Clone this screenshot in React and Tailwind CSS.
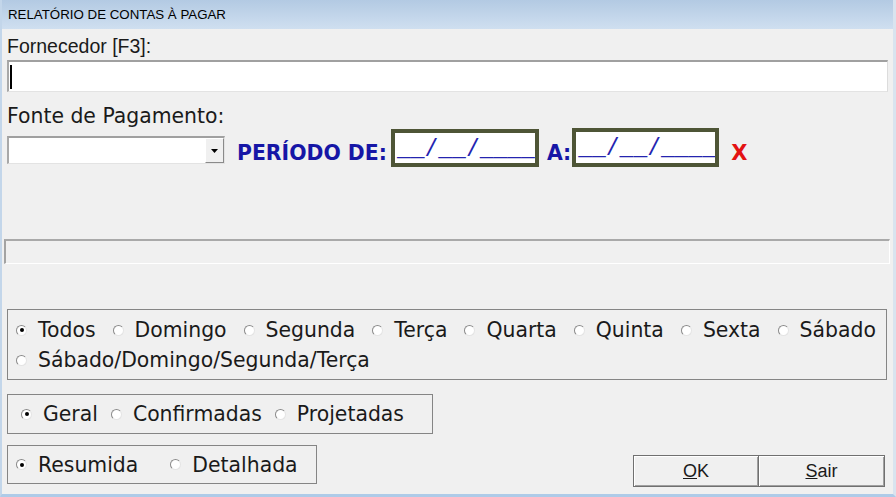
import React from 'react'

const OPT = "font-['DejaVu_Sans',sans-serif] text-[20.4px] leading-[30px] text-[#1a1a1a]"

function Radio({ checked }) {
  return (
    <span className="inline-flex w-[11px] h-[11px] shrink-0 items-center justify-center rounded-full border border-t-[#8a8a8a] border-l-[#8a8a8a] border-r-[#e4e4e4] border-b-[#e4e4e4] bg-white">
      {checked && <span className="w-[4px] h-[4px] rounded-full bg-black" />}
    </span>
  )
}

function Option({ label, checked }) {
  return (
    <label className="flex items-center whitespace-nowrap">
      <Radio checked={checked} />
      <span className="ml-[11px]">{label}</span>
    </label>
  )
}

function DateBox({ className }) {
  return (
    <div className={`border-4 border-[#4e5536] bg-white pl-[2px] overflow-hidden ${className}`}>
      <span className="block font-['Liberation_Mono',monospace] text-[23px] leading-[28px] pt-[3px] text-[#2424b0] whitespace-nowrap">
        __/__/____
      </span>
    </div>
  )
}

export default function App() {
  const days = ['Domingo', 'Segunda', 'Terça', 'Quarta', 'Quinta', 'Sexta', 'Sábado']

  return (
    <div className="w-[896px] h-[497px] flex flex-col bg-[#f0f0f0] border-l-2 border-r-[3px] border-b-[3px] border-l-[#c3d6ea] border-r-[#d9e4ef] border-b-[#aecbe8] overflow-hidden">
      {/* title bar */}
      <div className="h-[29px] shrink-0 flex items-center pl-[6px] bg-gradient-to-b from-[#b3cae3] to-[#cfdff0]">
        <span className="font-['Liberation_Sans',sans-serif] text-[13.3px] text-black">RELATÓRIO DE CONTAS À PAGAR</span>
      </div>

      <div className="flex flex-col px-[5px]">
        <label className="mt-[7px] font-['Liberation_Sans',sans-serif] text-[19.5px] leading-[21px] text-[#1a1a1a]">
          Fornecedor [F3]:
        </label>
        <div className="mt-[3px] h-[32px] bg-white border-t-2 border-l-2 border-b border-r border-t-[#a0a0a0] border-l-[#a8a8a8] border-b-[#e3e3e3] border-r-[#dcdcdc] flex items-center pl-[1px]">
          <span className="w-[2px] h-[24px] bg-black" />
        </div>

        <label className="mt-[13px] font-['DejaVu_Sans',sans-serif] text-[20.4px] leading-[23px] text-[#1a1a1a]">
          Fonte de Pagamento:
        </label>

        <div className="flex items-start h-[39px]">
          <div className="mt-[8px] w-[218px] h-[28px] bg-white border-t-2 border-l-2 border-b border-r border-t-[#a0a0a0] border-l-[#a8a8a8] border-b-[#e3e3e3] border-r-[#e3e3e3] flex justify-end items-stretch">
            <div className="w-[19px] bg-[#f0f0f0] border border-t-white border-l-white border-r-[#8a8a8a] border-b-[#8a8a8a] flex items-center justify-center">
              <svg width="7" height="4" viewBox="0 0 7 4"><path d="M0 0h7L3.5 4z" fill="#000" /></svg>
            </div>
          </div>
          <span className="ml-[12px] mt-[13px] font-['DejaVu_Sans',sans-serif] font-bold text-[20.4px] leading-[24px] text-[#1616a6] whitespace-nowrap">
            PERÍODO DE:
          </span>
          <DateBox className="ml-[4px] mt-[1px] w-[148px] h-[38px]" />
          <span className="ml-[8px] mt-[13px] font-['DejaVu_Sans',sans-serif] font-bold text-[20.4px] leading-[24px] text-[#1616a6]">
            A:
          </span>
          <DateBox className="ml-[1px] w-[147px] h-[39px]" />
          <span className="ml-[12px] mt-[13px] font-['DejaVu_Sans',sans-serif] font-bold text-[21px] leading-[24px] text-[#e31212]">
            X
          </span>
        </div>

        {/* progress bar */}
        <div className="mt-[72px] ml-[-3px] mr-[-2px] h-[25px] border-t-2 border-l-2 border-b border-r border-t-[#a9a9a9] border-l-[#a3a3a3] border-b-white border-r-white" />

        {/* days */}
        <div className={`mt-[45px] mr-[1px] h-[71px] border border-[#858585] pl-[8px] pt-[5px] ${OPT}`}>
          <div className="flex items-center gap-x-[17px]">
            <Option label="Todos" checked />
            {days.map(d => <Option key={d} label={d} />)}
          </div>
          <div className="flex items-center">
            <Option label="Sábado/Domingo/Segunda/Terça" />
          </div>
        </div>

        <div className={`mt-[14px] w-[426px] h-[40px] border border-[#858585] pl-[13px] flex items-center gap-x-[13px] ${OPT}`}>
          <Option label="Geral" checked />
          <Option label="Confirmadas" />
          <Option label="Projetadas" />
        </div>

        <div className="mt-[11px] flex items-start justify-between">
          <div className={`w-[310px] h-[39px] border border-[#858585] pl-[8px] flex items-center gap-x-[32px] ${OPT}`}>
            <Option label="Resumida" checked />
            <Option label="Detalhada" />
          </div>
          <div className="mt-[10px] mr-[3px] flex font-['Liberation_Sans',sans-serif] text-[18px] text-[#1a1a1a]">
            <button className="w-[126px] h-[32px] bg-[#f0f0f0] border border-[#707070] shadow-[inset_1px_1px_0_#ffffff,inset_-1px_-1px_0_#a0a0a0]">
              <span className="underline">O</span>K
            </button>
            <button className="w-[126px] h-[32px] bg-[#f0f0f0] border border-l-0 border-[#707070] shadow-[inset_1px_1px_0_#ffffff,inset_-1px_-1px_0_#a0a0a0]">
              <span className="underline">S</span>air
            </button>
          </div>
        </div>
      </div>
    </div>
  )
}
